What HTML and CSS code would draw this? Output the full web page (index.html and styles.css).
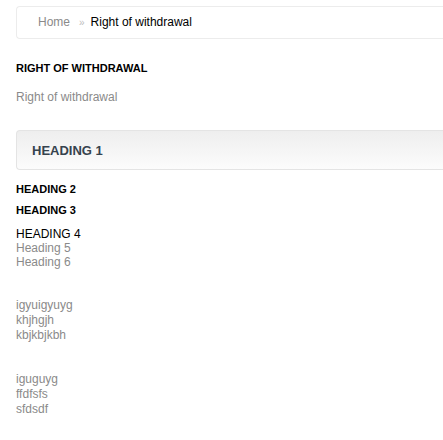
FILE: index.html
```html
<!DOCTYPE html>
<html lang="en">
<head>
    <meta charset="UTF-8">
    <meta name="viewport" content="width=device-width, initial-scale=1.0">
    <title>Right of withdrawal</title>
    <link rel="stylesheet" href="styles.css">
</head>
<body>
    <div class="page">
        <div class="breadcrumb">
            <a href="#" class="crumb-home">Home</a>
            <span class="crumb-sep">&raquo;</span>
            <span class="crumb-current">Right of withdrawal</span>
        </div>

        <h1 class="page-title">RIGHT OF WITHDRAWAL</h1>
        <p class="page-intro">Right of withdrawal</p>

        <div class="content">
            <h1 class="box-heading">HEADING 1</h1>
            <h2>HEADING 2</h2>
            <h3>HEADING 3</h3>
            <h4>HEADING 4</h4>
            <h5>Heading 5</h5>
            <h6>Heading 6</h6>

            <p>igyuigyuyg<br>khjhgjh<br>kbjkbjkbh</p>
            <p>iguguyg<br>ffdfsfs<br>sfdsdf</p>
        </div>
    </div>
</body>
</html>
```

FILE: styles.css
```css
* {
    margin: 0;
    padding: 0;
    box-sizing: border-box;
}

body {
    background: #fff;
    color: #000;
    font-family: "Liberation Sans", Arial, sans-serif;
    font-size: 12px;
    overflow: hidden;
}

.page {
    padding: 6px 0 6px 16px;
}

.breadcrumb {
    display: flex;
    align-items: center;
    height: 33px;
    padding-left: 21px;
    border: 1px solid #ececec;
    border-right: none;
    border-radius: 4px 0 0 4px;
    line-height: 15px;
}

.crumb-home {
    margin-right: 9px;
    color: #8a8a8a;
    text-decoration: none;
}

.crumb-sep {
    margin-right: 6px;
    color: #bdbdbd;
    font-size: 10px;
}

.crumb-current {
    color: #000;
}

.page-title {
    margin-top: 22px;
    font-size: 11px;
    font-weight: bold;
    line-height: 15px;
}

.page-intro {
    margin-top: 14px;
    color: #8a8a8a;
    line-height: 15px;
}

.content {
    margin-top: 25px;
}

.box-heading {
    display: flex;
    align-items: center;
    height: 40px;
    padding-left: 15px;
    border: 1px solid #e4e4e4;
    border-right: none;
    border-radius: 4px 0 0 4px;
    background: linear-gradient(#eeeeee, #fcfcfc);
    color: #36434e;
    font-size: 13px;
    font-weight: bold;
}

h2, h3 {
    font-size: 11px;
    font-weight: bold;
    line-height: 15px;
}

h2 {
    margin-top: 12px;
}

h3 {
    margin-top: 6px;
}

h4, h5, h6 {
    font-size: 12px;
    font-weight: normal;
}

h4 {
    margin-top: 10px;
    line-height: 13px;
}

h5 {
    line-height: 14px;
}

h6 {
    line-height: 15px;
}

h5, h6 {
    color: #8a8a8a;
}

.content p {
    color: #8a8a8a;
    line-height: 15px;
}

h6 + p {
    margin-top: 28px;
}

p + p {
    margin-top: 29px;
}
```
